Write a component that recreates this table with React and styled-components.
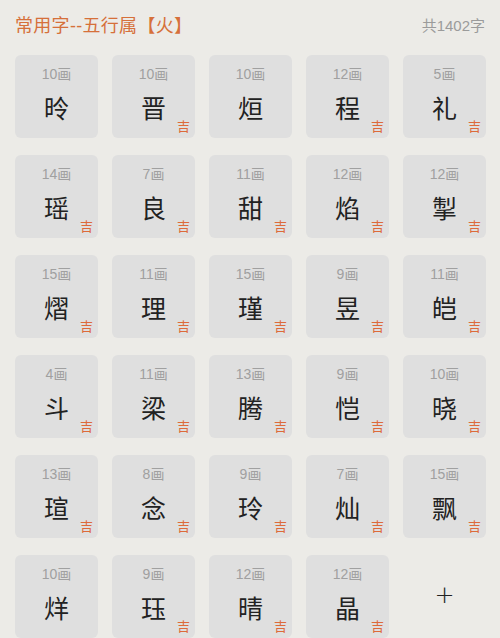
import React from "react";
import styled, { createGlobalStyle } from "styled-components";

const GlobalStyle = createGlobalStyle`
  html, body {
    margin: 0;
    padding: 0;
    background: #ecebe7;
  }
  body {
    font-family: "Liberation Sans", "Noto Sans CJK SC", sans-serif;
  }
`;

const Page = styled.div`
  width: 500px;
  height: 638px;
  overflow: hidden;
  background: #ecebe7;
`;

const Header = styled.div`
  display: flex;
  align-items: center;
  justify-content: space-between;
  height: 48px;
  padding: 0 15px;
  box-sizing: border-box;
`;

const Title = styled.div`
  color: #d6703a;
  font-size: 18px;
  letter-spacing: 0.3px;
`;

const Count = styled.div`
  color: #9b9b9b;
  font-size: 15px;
`;

const Grid = styled.div`
  display: grid;
  grid-template-columns: repeat(5, 83px);
  column-gap: 14px;
  row-gap: 17px;
  padding: 7px 15px 0 15px;
`;

const Card = styled.div`
  position: relative;
  height: 83px;
  border-radius: 6px;
  background: ${(p) => (p.$empty ? "transparent" : "#dfdfdf")};
  display: flex;
  flex-direction: column;
  align-items: center;
`;

const Strokes = styled.div`
  margin-top: 11px;
  font-size: 14px;
  line-height: 16px;
  color: #a0a0a0;
`;

const Char = styled.div`
  margin-top: 12px;
  font-size: 25px;
  line-height: 30px;
  color: #222;
`;

const Lucky = styled.span`
  position: absolute;
  right: 5px;
  bottom: 5px;
  font-size: 13px;
  line-height: 13px;
  color: #dd6a3a;
`;

const Plus = styled.div`
  margin-top: 28px;
  font-size: 24px;
  line-height: 24px;
  font-weight: 300;
  color: #222;
  font-family: "DejaVu Sans", sans-serif;
`;

const chars = [
  ["10画", "昤", false],
  ["10画", "晋", true],
  ["10画", "烜", false],
  ["12画", "程", true],
  ["5画", "礼", true],
  ["14画", "瑶", true],
  ["7画", "良", true],
  ["11画", "甜", true],
  ["12画", "焰", true],
  ["12画", "掣", true],
  ["15画", "熠", true],
  ["11画", "理", true],
  ["15画", "瑾", true],
  ["9画", "昱", true],
  ["11画", "皑", true],
  ["4画", "斗", true],
  ["11画", "梁", true],
  ["13画", "腾", true],
  ["9画", "恺", true],
  ["10画", "晓", true],
  ["13画", "瑄", true],
  ["8画", "念", true],
  ["9画", "玲", true],
  ["7画", "灿", true],
  ["15画", "飘", true],
  ["10画", "烊", false],
  ["9画", "珏", true],
  ["12画", "晴", true],
  ["12画", "晶", true],
];

export default function App() {
  return (
    <Page>
      <GlobalStyle />
      <Header>
        <Title>常用字--五行属【火】</Title>
        <Count>共1402字</Count>
      </Header>
      <Grid>
        {chars.map(([s, c, lucky], i) => (
          <Card key={i}>
            <Strokes>{s}</Strokes>
            <Char>{c}</Char>
            {lucky && <Lucky>吉</Lucky>}
          </Card>
        ))}
        <Card $empty>
          <Plus>+</Plus>
        </Card>
      </Grid>
    </Page>
  );
}
